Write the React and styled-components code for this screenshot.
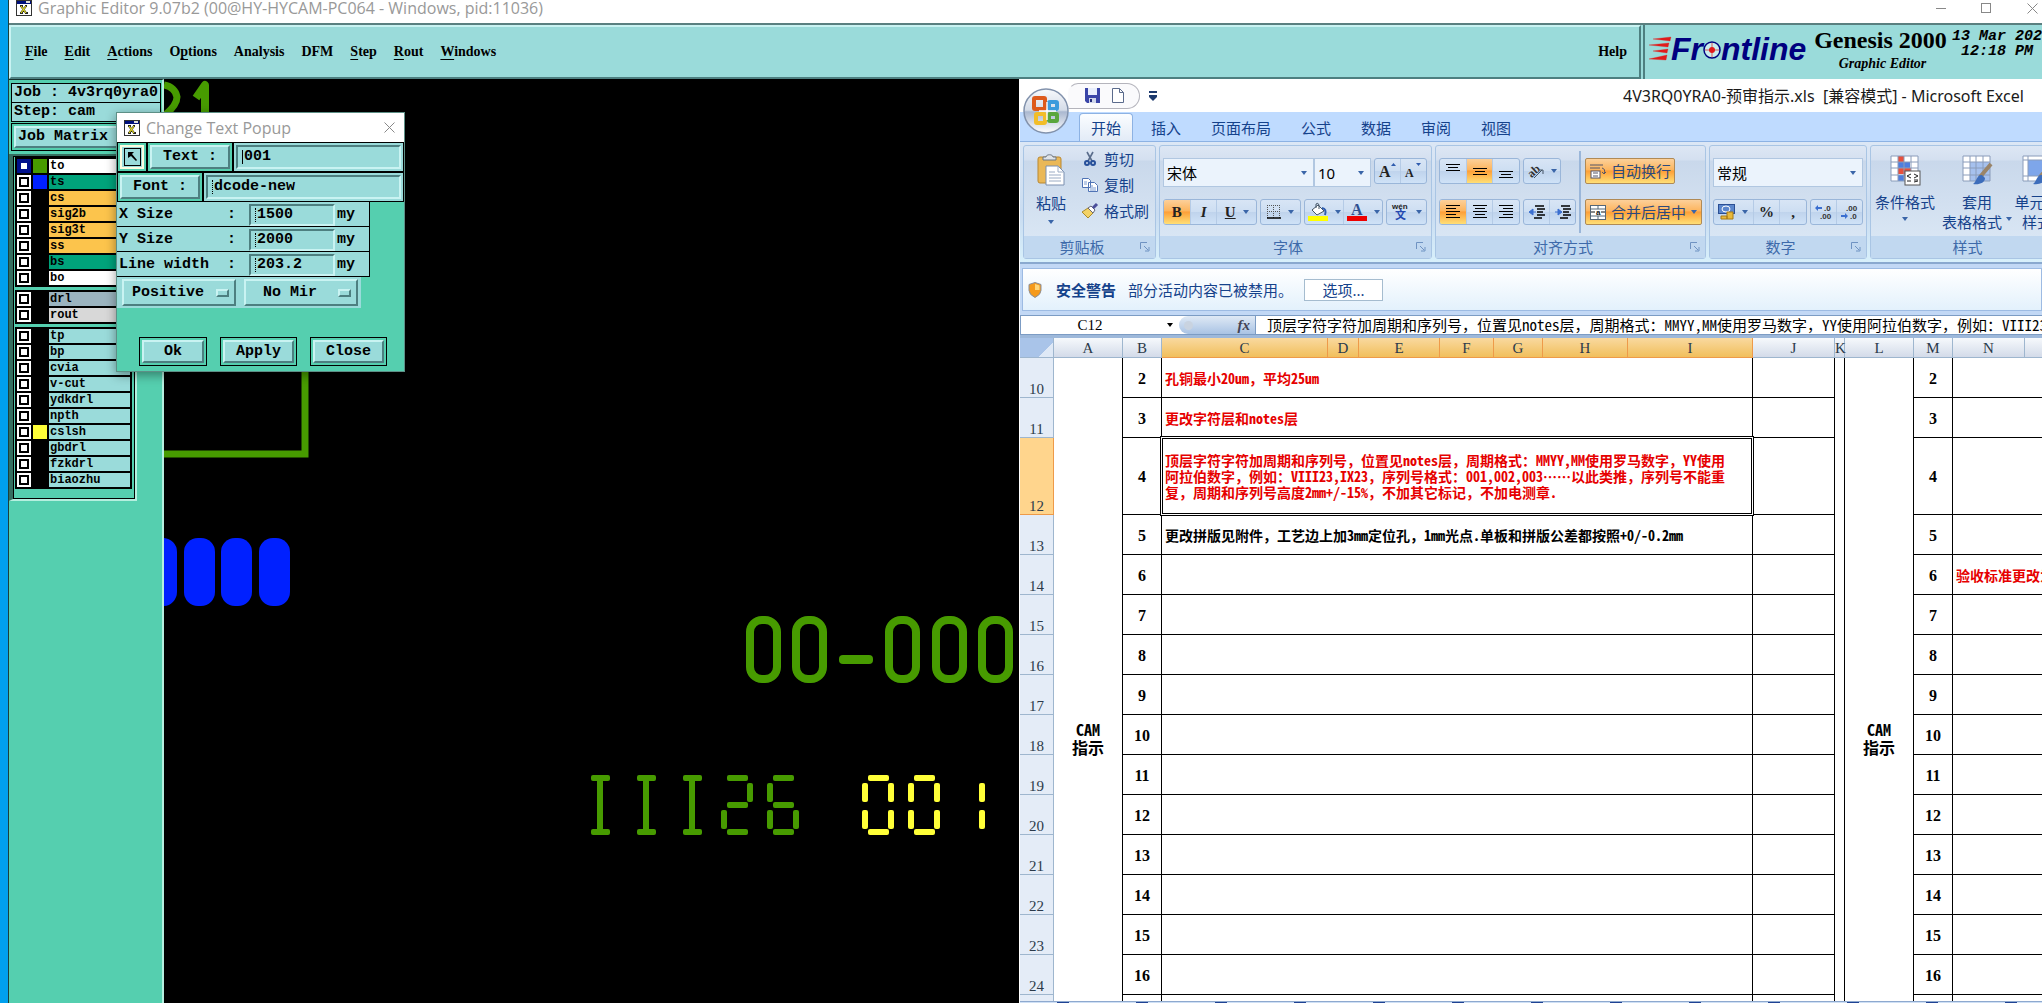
import React from 'react';
import styled, { createGlobalStyle, css } from 'styled-components';

const GlobalStyle = createGlobalStyle`
  *, *::before, *::after {
    box-sizing: border-box;
  }
  body {
    margin: 0;
    overflow: hidden;
    font-family: "Noto Sans", "Noto Sans CJK SC", sans-serif;
  }
  button, input, select {
    margin: 0;
    padding: 0;
    border: 0;
    border-radius: 0;
    background: none;
    color: inherit;
    font: inherit;
    outline: none;
  }
  svg {
    display: block;
    flex: none;
    overflow: visible;
  }
`;

const uiFont = '"Noto Sans", "Noto Sans CJK SC", sans-serif';
const songFont = '"Noto Sans Mono CJK SC", "Noto Sans CJK SC", monospace';
const courier = '"Liberation Mono", monospace';
const times = '"Liberation Serif", serif';

const raised = css`
  border: 2px solid;
  border-color: #c9f3f2 #4d7f80 #4d7f80 #c9f3f2;
`;

const sunken = css`
  border: 2px solid;
  border-color: #4d7f80 #c9f3f2 #c9f3f2 #4d7f80;
`;

/* ---------- Genesis frame ---------- */

const Desktop = styled.div`
  display: flex;
  height: 100vh;
  background: #00a0ee;
  padding-left: 8px;
`;

const Frame = styled.main`
  display: flex;
  flex-direction: column;
  flex: 1;
  min-width: 0;
  border-left: 1px solid #1c3f3c;
  background: #fff;
`;

const TitleBar = styled.header`
  display: flex;
  align-items: center;
  height: 23px;
  padding: 0 4px 7px 7px;
  font: 16px/20px "Open Sans", sans-serif;
  color: #999;
  white-space: nowrap;
`;

const TitleText = styled.span`
  flex: 1;
  margin-left: 6px;
`;

const WindowButtons = styled.div`
  display: flex;
  gap: 35px;
`;

const IconButton = styled.button`
  display: flex;
  align-items: center;
  justify-content: center;
`;

const MenuBar = styled.div`
  display: flex;
  height: 56px;
  border-top: 2px solid #5a8080;
  background: #9adbda;
  font: bold 14px/18px ${times};
  color: #000;
`;

const Menus = styled.nav`
  display: flex;
  align-items: center;
  gap: 17px;
  flex: 1;
  padding: 0 12px 0 14px;
  ${raised}
`;

const MenuButton = styled.button`
  white-space: nowrap;
  margin-left: ${(p) => (p.$end ? 'auto' : '0')};
  u {
    text-underline-offset: 3px;
  }
`;

const Brand = styled.div`
  display: flex;
  flex: none;
  width: 399px;
  margin-left: 2px;
  padding-left: 4px;
  border-left: 2px solid #4d7f80;
  overflow: hidden;
  white-space: nowrap;
`;

const Logo = styled.div`
  display: flex;
  align-items: center;
  width: 160px;
  height: 48px;
  font: italic bold 32px/36px "Liberation Sans", sans-serif;
  color: #00007f;
`;

const Product = styled.div`
  width: 143px;
  padding-top: 2px;
  text-align: center;
  font: bold 24px/26px ${times};
  small {
    display: block;
    padding-left: 4px;
    font: italic bold 14px/22px ${times};
  }
`;

const Clock = styled.div`
  padding-top: 4px;
  font: italic bold 15px/15px ${courier};
  white-space: pre;
`;

const Work = styled.div`
  display: flex;
  flex: 1;
  min-height: 0;
`;

/* ---------- Layer sidebar ---------- */

const Sidebar = styled.aside`
  flex: none;
  width: 155px;
  padding: 3px 1px 0 2px;
  border-top: 1px solid #16302c;
  border-right: 2px solid #b5efdf;
  background: #55cfaf;
  font: bold 15px/18px ${courier};
  color: #000;
`;

const InfoLine = styled.div`
  height: 20px;
  margin-bottom: -1px;
  padding-left: 2px;
  border: 1px solid #000;
  background: #9adbda;
  white-space: pre;
`;

const MatrixWrap = styled.div`
  margin-top: 2px;
  padding: 2px;
  border: 1px solid #000;
`;

const MatrixButton = styled.button`
  display: block;
  width: 100%;
  height: 22px;
  padding-left: 2px;
  text-align: left;
  background: #9adbda;
  ${raised}
`;

const LayerPanel = styled.div`
  width: 128px;
  margin: 3px 0 0 -2px;
  border: solid;
  border-width: 2px 2px 2px 4px;
  border-color: #356f60 #b5efdf #b5efdf #356f60;
`;

const LayerInner = styled.div`
  display: flex;
  flex-direction: column;
  gap: 3px;
  padding: 0 2px 9px 1px;
  border: 1px solid #000;
`;

const LayerGroup = styled.div`
  display: flex;
  flex-direction: column;
  gap: 2px;
  padding: 2px;
  background: #000;
`;

const LayerRow = styled.label`
  display: grid;
  grid-template-columns: 14px 14px 1fr;
  gap: 2px;
  height: 14px;
  font-size: 12px;
  line-height: 14px;
`;

const LayerCheck = styled.input`
  appearance: none;
  width: 14px;
  height: 14px;
  padding: 2px;
  background: ${(p) => (p.$active ? '#00108c' : '#fff')};
  &::before {
    content: '';
    display: block;
    width: 10px;
    height: 10px;
    border: 2px solid ${(p) => (p.$active ? '#00108c' : '#000')};
    background: #fff;
  }
`;

const Swatch = styled.span`
  background: ${(p) => p.$color || '#000'};
`;

const LayerName = styled.span`
  padding-left: 1px;
  background: ${(p) => p.$color};
`;

const Canvas = styled.section`
  flex: 1;
  min-width: 0;
  background: #000;
  overflow: hidden;
`;

/* ---------- Change text popup ---------- */

const Popup = styled.section`
  position: absolute;
  left: 116px;
  top: 112px;
  width: 289px;
  height: 260px;
  background: #55cfaf;
  border: 1px solid #5d8f86;
  box-shadow: 0 3px 10px rgba(0, 0, 0, 0.4);
  font: bold 15px/18px ${courier};
  color: #000;
`;

const PopupTitle = styled.header`
  display: flex;
  align-items: center;
  height: 29px;
  padding: 0 9px 0 7px;
  background: #fff;
  font: 16px/20px "Open Sans", sans-serif;
  color: #999;
`;

const PopupRow = styled.div`
  display: flex;
  height: 30px;
`;

const Boxed = styled.div`
  display: flex;
  width: ${(p) => (p.$width ? `${p.$width}px` : 'auto')};
  flex: ${(p) => (p.$width ? 'none' : 1)};
  padding: 2px;
  border: 1px solid #000;
  background: ${(p) => (p.$fill ? '#9adbda' : 'transparent')};
`;

const PushButton = styled.button`
  flex: 1;
  display: flex;
  align-items: center;
  justify-content: center;
  background: #9adbda;
  white-space: pre;
  ${raised}
`;

const PickButton = styled(PushButton)`
  border-color: #fdfce0;
`;

const Entry = styled.div`
  display: flex;
  align-items: center;
  width: ${(p) => (p.$width ? `${p.$width}px` : '100%')};
  min-width: 0;
  padding-left: 4px;
  ${sunken}
  &::before {
    content: '';
    height: 14px;
    border-left: 1px ${(p) => (p.$focus ? 'solid' : 'dotted')} #000;
    margin-right: 1px;
  }
  input {
    width: 100%;
    min-width: 0;
  }
`;

const SizeRow = styled.div`
  display: flex;
  align-items: center;
  width: 253px;
  height: 25px;
  padding: 2px 0 0 2px;
  border: 1px solid #000;
  border-width: 0 1px 1px 0;
  background: #9adbda;
  label {
    width: 130px;
    white-space: pre;
  }
  span {
    margin-left: 2px;
  }
`;

const OptionRow = styled.div`
  display: flex;
  gap: 8px;
  width: 244px;
  height: 31px;
  padding: 2px 0 2px 5px;
  background: #9adbda;
`;

const OptionMenu = styled.div`
  display: flex;
  align-items: center;
  width: 114px;
  padding-right: 5px;
  ${raised}
  select {
    appearance: none;
    flex: 1;
    min-width: 0;
    padding-left: ${(p) => p.$indent}px;
  }
  &::after {
    content: '';
    width: 13px;
    height: 8px;
    ${raised}
  }
`;

const PopupActions = styled.div`
  display: flex;
  gap: 13px;
  height: 29px;
  margin: 29px 0 0 22px;
`;

/* ---------- Excel ---------- */

const Excel = styled.section`
  position: relative;
  display: flex;
  flex-direction: column;
  flex: none;
  width: calc(50vw + 2px);
  min-width: 0;
  padding-left: 1px;
  background: #fff;
  overflow: hidden;
  font: 15px/20px ${uiFont};
  color: #15428b;
  white-space: nowrap;
`;

const ExcelTop = styled.header`
  display: flex;
  align-items: center;
  height: 33px;
  padding-left: 48px;
`;

const Orb = styled.button`
  position: absolute;
  left: 4px;
  top: 8px;
`;

const QuickAccess = styled.div`
  display: flex;
  align-items: center;
  gap: 12px;
  height: 26px;
  width: 72px;
  margin-right: 9px;
  padding-left: 16px;
  border: 1px solid #b4b4bc;
  border-left-color: transparent;
  border-radius: 10px 13px 13px 0;
  background: #fafafc;
`;

const ExcelTitle = styled.h1`
  flex: 1;
  margin: 0;
  padding: 1px 0 0 466px;
  font: 16px/24px ${uiFont};
  color: #1a1a1a;
`;

const Tabs = styled.nav`
  display: flex;
  gap: 6px;
  height: 29px;
  padding: 1px 0 0 59px;
  background: #bfdbff;
`;

const Tab = styled.button`
  height: 29px;
  padding: 0 11px 1px;
  border: 1px solid transparent;
  border-bottom: 0;
  border-radius: 4px 4px 0 0;
  ${(p) => p.$active && css`
    border-color: #8db2e3;
    background: linear-gradient(#fbfdff, #e1eaf6);
  `}
`;

const Ribbon = styled.div`
  display: flex;
  gap: 3px;
  height: 123px;
  padding: 3px 0 3px 3px;
  border-top: 1px solid #8db2e3;
  border-bottom: 2px solid #8aa9cf;
  background: linear-gradient(#dce7f5, #c9dcf1 60%, #d8f0fb);
`;

const Group = styled.section`
  display: flex;
  flex-direction: column;
  flex: none;
  width: ${(p) => p.$width}px;
  border: 1px solid #a9c5e4;
  border-radius: 3px;
  background: linear-gradient(#dde7f4 0, #d4e0f0 14px, #c9d8eb 15px, #d9e6f4 92px);
`;

const GroupBody = styled.div`
  display: flex;
  height: 91px;
`;

const GroupRows = styled.div`
  display: flex;
  flex-direction: column;
  gap: 12px;
  padding: 12px 0 0 3px;
`;

const GroupRow = styled.div`
  display: flex;
  align-items: flex-start;
  gap: 3px;
  height: ${(p) => p.$height}px;
`;

const GroupFooter = styled.footer`
  display: flex;
  align-items: center;
  height: 22px;
  padding-right: 5px;
  background: #c1d8f0;
  color: #3e6aaa;
  span {
    flex: 1;
    text-align: center;
  }
`;

const Combo = styled.div`
  display: flex;
  align-items: center;
  width: ${(p) => p.$width}px;
  height: 29px;
  margin-right: ${(p) => (p.$joined ? '-3px' : '0')};
  padding: 0 6px 0 3px;
  border: 1px solid #b1c7e1;
  background: #ebf3fc;
  color: #000;
  select {
    appearance: none;
    flex: 1;
    min-width: 0;
  }
`;

const ButtonSet = styled.div`
  display: flex;
  height: 26px;
  width: ${(p) => p.$width}px;
  border: 1px solid #9ab6d9;
  border-radius: 3px;
  background: linear-gradient(#d8e5f5, #cddef2 48%, #bfd3ec 50%, #cfe2f7);
  overflow: hidden;
`;

const orange = css`
  background: linear-gradient(#fcd09a, #fdb55e 45%, #fd9f38 50%, #ffdf76);
`;

const Tool = styled.button`
  display: flex;
  align-items: center;
  justify-content: center;
  gap: 7px;
  flex: ${(p) => p.$grow || 1};
  border-right: 1px solid #b5cbe6;
  font: bold 15px/20px ${times};
  color: #222;
  &:last-child {
    border-right: 0;
  }
  ${(p) => p.$on && orange}
`;

const TextTool = styled.button`
  display: flex;
  align-items: center;
  gap: 5px;
  width: ${(p) => p.$width}px;
  height: 26px;
  padding: 0 4px;
  border: 1px solid #b08a55;
  border-radius: 2px;
  color: #2d4a7c;
  ${orange}
`;

const Divider = styled.div`
  width: 2px;
  height: 82px;
  margin: 5px 1px 0 3px;
  background: #9ab6d9;
`;

const Paste = styled.button`
  display: flex;
  flex-direction: column;
  align-items: center;
  width: 54px;
  padding-top: 8px;
  gap: 7px;
`;

const ClipItems = styled.div`
  display: flex;
  flex-direction: column;
  padding: 1px 0 0 4px;
`;

const ClipItem = styled.button`
  display: flex;
  align-items: center;
  gap: 6px;
  height: 26px;
  padding-bottom: 2px;
`;

const BigTool = styled.button`
  display: flex;
  flex-direction: column;
  align-items: center;
  width: ${(p) => p.$width}px;
  padding-top: 9px;
  span {
    display: flex;
    align-items: center;
    gap: 4px;
    height: 20px;
  }
  svg:first-child {
    margin-bottom: 6px;
  }
`;

const Security = styled.div`
  display: flex;
  align-items: center;
  height: 43px;
  margin: 4px 0 4px 2px;
  padding-left: 5px;
  border: 1px solid #9dbbe3;
  background: linear-gradient(#fff, #e3f1fc);
  b {
    margin: 0 12px 0 14px;
  }
  button {
    width: 79px;
    height: 22px;
    margin-left: 11px;
    border: 1px solid #a5bccf;
    background: #fff;
  }
`;

const SecurityBand = styled.div`
  background: #c2d8f5;
  overflow: hidden;
`;

const FormulaBar = styled.div`
  display: flex;
  align-items: center;
  height: 20px;
  border: 1px solid #7c9cc4;
  border-right: 0;
  color: #000;
`;

const NameBox = styled.input`
  width: 138px;
  margin-right: 8px;
  text-align: center;
  font: 15px/18px ${times};
`;

const FxPill = styled.button`
  display: flex;
  align-items: center;
  justify-content: space-between;
  width: 77px;
  height: 18px;
  margin-left: 6px;
  padding: 0 5px;
  border-right: 1px solid #7c9cc4;
  border-radius: 9px 0 0 9px;
  background: linear-gradient(#dfe9f5, #a9c3e4);
  font: italic bold 15px/16px ${times};
  color: #445;
  &::before {
    content: '';
    width: 9px;
    height: 9px;
    border-radius: 5px;
    background: #c9d3e0;
  }
`;

const FormulaInput = styled.input`
  flex: 1;
  min-width: 0;
  padding-left: 11px;
  font: 15px/18px ${songFont};
`;

const Sheet = styled.div`
  flex: 1;
  min-height: 0;
  overflow: hidden;
  border-top: 3px solid #9db8da;
  color: #000;
`;

const Grid = styled.table`
  table-layout: fixed;
  width: 1085px;
  border-collapse: separate;
  border-spacing: 0;
`;

const ColHead = styled.th`
  height: 20px;
  padding: 0;
  border: 1px solid ${(p) => (p.$on ? '#ee9a49' : '#9eb6ce')};
  border-width: 0 1px 1px 0;
  background: ${(p) => (p.$on
    ? 'linear-gradient(#f9d99f, #f1bf5c)'
    : 'linear-gradient(#f6f9fc, #d3dbe9)')};
  font: 15px/18px ${times};
  color: #2b3a4a;
`;

const Corner = styled(ColHead)`
  background: linear-gradient(135deg, #a9c4e9 72%, #dfe9f6 72%);
`;

const RowHead = styled.th`
  height: ${(p) => p.$height}px;
  padding: 0;
  border: 1px solid ${(p) => (p.$on ? '#ee9a49' : '#9eb6ce')};
  border-width: 0 1px 1px 0;
  background: ${(p) => (p.$on ? '#ffd58d' : '#e4ecf7')};
  vertical-align: bottom;
  font: 15px/16px ${times};
  color: #2b3a4a;
`;

const Cell = styled.td`
  position: relative;
  padding: 0 3px;
  border: 0 solid #000;
  border-width: 0 1px 1px 0;
  font: bold 14px/16px ${songFont};
  color: ${(p) => (p.$red ? '#e60000' : '#000')};
  white-space: pre;
`;

const SelectedCell = styled(Cell)`
  &::after {
    content: '';
    position: absolute;
    inset: -2px;
    border: 1px solid #000;
    box-shadow: inset 0 0 0 1px #fff, inset 0 0 0 2px #000;
  }
`;

const NumberCell = styled(Cell)`
  padding-top: 2px;
  text-align: center;
  font: bold 16px/18px ${times};
`;

const SideCell = styled(Cell)`
  padding: 82px 0 0;
  border-bottom: 0;
  text-align: center;
  font-size: 16px;
  line-height: 18px;
`;

const GapCell = styled(Cell)`
  padding: 0;
  border-bottom: 0;
`;

const SheetTabs = styled.div`
  height: 2px;
  border-top: 1px solid #8ea9cf;
  background: repeating-linear-gradient(90deg, #cfe0f5 0 37px, #1f4293 37px 49px, #cfe0f5 49px 79px);
`;

const Caret = ({ color = '#3a65a8' }) => (
  <svg width="6" height="4" viewBox="0 0 6 4"><path d="M0 0h6L3 4z" fill={color} /></svg>
);

const XIcon = () => (
  <svg width="16" height="16" viewBox="0 0 16 16">
    <rect x=".5" y=".5" width="15" height="15" fill="#fff" stroke="#333" />
    <rect x="1" y="1" width="14" height="3" fill="#00107c" />
    <rect x="10" y="1" width="4" height="2" fill="#ddd" />
    <path d="M5 6l5 7M10 6l-5 7M4 6h3M4 13h3M9 6h2M9 13h3" stroke="#222" strokeWidth="2" />
    <path d="M5 6l5 7M10 6l-5 7" stroke="#e8df20" strokeWidth="1.2" />
  </svg>
);

const CloseIcon = () => (
  <svg width="11" height="11" viewBox="0 0 11 11"><path d="M.5.5l10 10M10.5.5l-10 10" stroke="#888" /></svg>
);

const Launcher = () => (
  <svg width="10" height="10" viewBox="0 0 10 10" fill="none" stroke="#6f93c2">
    <path d="M.5 7V.5H7" />
    <path d="M4 4l4 4M9 5v4H5" />
  </svg>
);

const Lines = ({ widths, align = 'center', top = 0 }) => (
  <svg width="14" height="16" viewBox="0 0 14 16" shapeRendering="crispEdges">
    {widths.map((w, i) => {
      const x = { left: 0, center: (14 - w) / 2, right: 14 - w }[align];
      return <rect key={i} x={x} y={top + i * 3} width={w} height="1" fill="#000" />;
    })}
  </svg>
);

const Indent = ({ out }) => (
  <svg width="16" height="14" viewBox="0 0 16 14">
    <path d="M6 1h9M8 4h8M8 7h6M8 10h8M5 13h8" stroke="#000" strokeWidth="1.3" />
    <path d={out ? 'M4 4L0 7l4 3zM3 7h4' : 'M3 4l4 3-4 3zM0 7h4'} fill="#3b6fd0" stroke="#3b6fd0" />
  </svg>
);

const FontGlyph = ({ size, up }) => (
  <svg width="18" height="18" viewBox="0 0 18 18">
    <text x="0" y="15" fontFamily="Liberation Serif" fontWeight="bold" fontSize={size} fill="#222">A</text>
    <path d={up ? 'M12 4h5l-2.500-3z' : 'M11 1h5l-2.500 3z'} fill="#2f5cae" />
  </svg>
);

const OrbIcon = () => (
  <svg width="46" height="48" viewBox="0 0 46 48">
    <defs>
      <linearGradient id="orb" x1="0" y1="0" x2="0" y2="1">
        <stop offset="0" stopColor="#f7f9fc" />
        <stop offset=".48" stopColor="#d5dce8" />
        <stop offset=".52" stopColor="#aab8d0" />
        <stop offset="1" stopColor="#fff" />
      </linearGradient>
    </defs>
    <circle cx="23" cy="24" r="22" fill="url(#orb)" stroke="#8292ac" strokeWidth="1.5" />
    <g fill="none" strokeWidth="4">
      <rect x="11" y="11" width="11" height="11" rx="1" stroke="#dd5a1c" />
      <rect x="26" y="15" width="8" height="7" rx="1" stroke="#3d9bdc" />
      <rect x="13" y="27" width="9" height="9" rx="1" stroke="#f2bd28" />
      <rect x="26" y="27" width="8" height="7" rx="1" stroke="#5aa63c" />
    </g>
    <path d="M24 15v18M16 24h17" stroke="#fff" strokeWidth="1.4" />
  </svg>
);

const PasteIcon = () => (
  <svg width="28" height="32" viewBox="0 0 28 32">
    <rect x="1" y="3" width="23" height="26" rx="2" fill="#eab857" stroke="#b98731" />
    <path d="M6 6h13V3h-3c0-3-7-3-7 0H6z" fill="#dfe3e8" stroke="#6b7683" />
    <path d="M9 12h12l6 6v13H9z" fill="#fff" stroke="#7a8fb0" />
    <path d="M21 12v6h6M12 18h6M12 21h12M12 24h12M12 27h12" fill="none" stroke="#9aabc4" />
  </svg>
);

const ScissorsIcon = () => (
  <svg width="16" height="16" viewBox="-1 0 16 16" fill="none">
    <path d="M4 1l5 9M10 1L5 10" stroke="#5a6d8c" strokeWidth="1.6" />
    <circle cx="4" cy="12" r="2" stroke="#27509a" strokeWidth="2" />
    <circle cx="10" cy="12" r="2" stroke="#27509a" strokeWidth="2" />
  </svg>
);

const CopyIcon = () => (
  <svg width="16" height="14" viewBox="0 0 16 14" fill="#fff" stroke="#4f73b5">
    <path d="M.5.5h6l2 2v7h-8zM6.500 4.500h6l3 3v6h-9z" />
    <path d="M2 4h3M2 6h3M8 8h3M8 10h6M8 12h6" stroke="#7b9bd1" />
  </svg>
);

const BrushIcon = () => (
  <svg width="16" height="14" viewBox="0 0 16 14">
    <path d="M0 8l6-4 5 5-5 5z" fill="#f3d266" stroke="#a98a2e" />
    <path d="M6 4l3-2 4 4-2 3z" fill="#fff" stroke="#667" />
    <path d="M11 4l4-4" stroke="#4b4f9a" strokeWidth="3" />
  </svg>
);

const TableIcon = ({ kind }) => (
  <svg width="31" height="31" viewBox="0 0 31 31">
    <path d="M1 1h27v25H1z" fill="#fff" />
    {kind === 'cond' && (
      <g>
        <path d="M8 1h6v6H8zM8 13h13v6H8z" fill="#e8503c" />
        <path d="M8 7h12v6H8zM8 20h6v6H8z" fill="#4e7ee0" />
      </g>
    )}
    {kind === 'table' && <path d="M8 7h20v19H8z" fill="#a6c1ee" />}
    {kind === 'cell' && <path d="M6 5h22v16H6z" fill="#7ea6ea" />}
    {kind === 'cell'
      ? <path d="M1 1h27v25H1zM6 1v25M1 5h27M1 21h27" fill="none" stroke="#8a9cba" />
      : <path d="M1 1h27v25H1zM8 1v25M14 1v25M21 1v25M1 7h27M1 13h27M1 20h27" fill="none" stroke="#8a9cba" />}
    {kind === 'cond' ? (
      <g>
        <rect x="15" y="16" width="15" height="14" fill="#fff" stroke="#555" />
        <path d="M21 19l-4 2 4 2M17 26h4M24 19l4 2-4 2M24 27l4-1M24 25h4" fill="none" stroke="#222" />
      </g>
    ) : (
      <g>
        <path d="M29 9L18 22" stroke="#9a8468" strokeWidth="4" />
        <path d="M20 20c-5-1-5 6-9 9 6 1 12-1 12-6z" fill="#3d6dbb" />
      </g>
    )}
  </svg>
);

const layerGroups = [
  [
    ['to', '#fff', '#479b00'],
    ['ts', '#00a37b', '#0020ff'],
    ['cs', '#fcc44c'],
    ['sig2b', '#fcc44c'],
    ['sig3t', '#fcc44c'],
    ['ss', '#fcc44c'],
    ['bs', '#00a37b'],
    ['bo', '#fff'],
  ],
  [
    ['drl', '#9bb4bf'],
    ['rout', '#d8d8d8'],
  ],
  [
    ['tp', '#9adbda'],
    ['bp', '#9adbda'],
    ['cvia', '#9adbda'],
    ['v-cut', '#9adbda'],
    ['ydkdrl', '#9adbda'],
    ['npth', '#9adbda'],
    ['cslsh', '#9adbda', '#ffff38'],
    ['gbdrl', '#9adbda'],
    ['fzkdrl', '#9adbda'],
    ['biaozhu', '#9adbda'],
  ],
];

const menus = [
  ['', 'F', 'ile'],
  ['', 'E', 'dit'],
  ['', 'A', 'ctions'],
  ['O', 'p', 'tions'],
  ['Analysis', '', ''],
  ['DFM', '', ''],
  ['', 'S', 'tep'],
  ['', 'R', 'out'],
  ['', 'W', 'indows'],
];

// [column letter, width, inside the current selection]
const columns = [
  ['A', 69], ['B', 39], ['C', 166, true], ['D', 31, true], ['E', 81, true],
  ['F', 54, true], ['G', 49, true], ['H', 85, true], ['I', 125, true],
  ['J', 82], ['K', 10], ['L', 69], ['M', 39], ['N', 72], ['O', 80],
];

const notes = {
  10: ['孔铜最小20um，平均25um', true],
  11: ['更改字符层和notes层', true],
  12: ['顶层字符字符加周期和序列号，位置见notes层，周期格式：MMYY,MM使用罗马数字，YY使用\n阿拉伯数字，例如：VIII23,IX23，序列号格式：001,002,003……以此类推，序列号不能重\n复，周期和序列号高度2mm+/-15%，不加其它标记，不加电测章.', true],
  13: ['更改拼版见附件，工艺边上加3mm定位孔，1mm光点.单板和拼版公差都按照+0/-0.2mm', false],
};

const rows = Array.from({ length: 16 }, (_, i) => i + 10);

const LayerList = () => (
  <LayerPanel>
    <LayerInner>
      {layerGroups.map((group) => (
        <LayerGroup key={group[0][0]}>
          {group.map(([name, color, swatch]) => (
            <LayerRow key={name}>
              <LayerCheck type="checkbox" $active={name === 'to'} />
              <Swatch $color={swatch} />
              <LayerName $color={color}>{name}</LayerName>
            </LayerRow>
          ))}
        </LayerGroup>
      ))}
    </LayerInner>
  </LayerPanel>
);

// Horizontal and vertical bars of the dashed character strokes
const Bars = ({ color, bars }) => (
  <g fill={color}>
    {bars.map(([x, y, w, h]) => <rect key={`${x}-${y}`} x={x} y={y} width={w} height={h} rx="2" />)}
  </g>
);

const segments = {
  top: [6, 0, 21, 6],
  topLeft: [0, 8, 6, 19],
  topRight: [26, 8, 6, 19],
  mid: [6, 27, 21, 6],
  lowLeft: [0, 35, 6, 19],
  lowRight: [26, 35, 6, 19],
  low: [6, 54, 21, 6],
};

const Digit = ({ x, y, color, on }) => (
  <g transform={`translate(${x} ${y})`}>
    <Bars color={color} bars={on.map((s) => segments[s])} />
  </g>
);

const Drawing = () => (
  <svg width="856" height="924" viewBox="164 79 856 924">
    <g fill="none" stroke="#479b00">
      <path d="M164 85q11 2 13 12q0 8-12 18M305 340V454H164" strokeWidth="7" />
      <path d="M196 98l9-13v30" strokeWidth="8" strokeLinejoin="round" />
      {[746, 792, 885, 932, 978].map((x) => (
        <rect key={x} x={x + 4} y="620" width="27" height="59" rx="12" strokeWidth="8" />
      ))}
    </g>
    <rect x="839" y="655" width="34" height="9" rx="4" fill="#479b00" />
    {[146, 184, 221, 259].map((x) => (
      <rect key={x} x={x} y="538" width="31" height="68" rx="14" fill="#0020ff" />
    ))}
    {[591, 637, 683].map((x) => (
      <Bars key={x} color="#479b00" bars={[[x, 775, 19, 6], [x + 6, 777, 6, 56], [x, 829, 19, 6]]} />
    ))}
    <Digit x={721} y={775} color="#479b00" on={['top', 'topRight', 'mid', 'lowLeft', 'low']} />
    <Digit x={767} y={775} color="#479b00" on={['top', 'topLeft', 'mid', 'lowLeft', 'lowRight', 'low']} />
    <Digit x={862} y={775} color="#ffff38" on={['top', 'topLeft', 'topRight', 'lowLeft', 'lowRight', 'low']} />
    <Digit x={908} y={775} color="#ffff38" on={['top', 'topLeft', 'topRight', 'lowLeft', 'lowRight', 'low']} />
    <Digit x={953} y={775} color="#ffff38" on={['topRight', 'lowRight']} />
  </svg>
);

const SizeField = ({ id, label, value }) => (
  <SizeRow>
    <label htmlFor={id}>{label}</label>
    <Entry $width={86}><input id={id} defaultValue={value} /></Entry>
    <span>my</span>
  </SizeRow>
);

const TextPopup = () => (
  <Popup>
    <PopupTitle>
      <XIcon />
      <TitleText>Change Text Popup</TitleText>
      <IconButton aria-label="Close popup"><CloseIcon /></IconButton>
    </PopupTitle>
    <PopupRow>
      <Boxed $width={30}>
        <PickButton aria-label="Pick text">
          <svg width="17" height="18" viewBox="0 0 17 18">
            <rect x=".5" y=".5" width="16" height="17" fill="none" stroke="#000" />
            <path d="M4 4h6L8 6l5 6-1 1-5-5-3 2z" fill="#000" />
          </svg>
        </PickButton>
      </Boxed>
      <Boxed $width={86}><PushButton>Text :</PushButton></Boxed>
      <Boxed $fill><Entry $focus><input aria-label="Text" defaultValue="001" /></Entry></Boxed>
    </PopupRow>
    <PopupRow>
      <Boxed $width={86}><PushButton>Font :</PushButton></Boxed>
      <Boxed $fill><Entry><input aria-label="Font" defaultValue="dcode-new" /></Entry></Boxed>
    </PopupRow>
    <SizeField id="x-size" label="X Size      :" value="1500" />
    <SizeField id="y-size" label="Y Size      :" value="2000" />
    <SizeField id="line-width" label="Line width  :" value="203.2" />
    <OptionRow>
      <OptionMenu $indent={8}><select aria-label="Polarity"><option>Positive</option></select></OptionMenu>
      <OptionMenu $indent={17}><select aria-label="Mirror"><option>No Mir</option></select></OptionMenu>
    </OptionRow>
    <PopupActions>
      <Boxed $width={68}><PushButton>Ok</PushButton></Boxed>
      <Boxed $width={77}><PushButton>Apply</PushButton></Boxed>
      <Boxed $width={77}><PushButton>Close</PushButton></Boxed>
    </PopupActions>
  </Popup>
);

const RibbonGroup = ({ label, width, launcher = true, children }) => (
  <Group $width={width}>
    <GroupBody>{children}</GroupBody>
    <GroupFooter>
      <span>{label}</span>
      {launcher && <IconButton aria-label={label}><Launcher /></IconButton>}
    </GroupFooter>
  </Group>
);

const FontGroup = () => (
  <RibbonGroup label="字体" width={273}>
    <GroupRows>
      <GroupRow $height={29}>
        <Combo $width={151} $joined><select aria-label="字体"><option>宋体</option></select><Caret /></Combo>
        <Combo $width={57}><select aria-label="字号"><option>10</option></select><Caret /></Combo>
        <ButtonSet $width={53}>
          <Tool aria-label="增大字号"><FontGlyph size={16} up /></Tool>
          <Tool aria-label="减小字号"><FontGlyph size={12} /></Tool>
        </ButtonSet>
      </GroupRow>
      <GroupRow $height={26}>
        <ButtonSet $width={94}>
          <Tool $on>B</Tool>
          <Tool><i>I</i></Tool>
          <Tool $grow={1.5}><u>U</u><Caret /></Tool>
        </ButtonSet>
        <ButtonSet $width={41}>
          <Tool aria-label="边框">
            <svg width="14" height="14" viewBox="0 0 14 14">
              <path d="M.5 0v13M6.500 0v13M12.500 0v13M0 .5h13M0 6.500h13" stroke="#555" strokeDasharray="1 1" />
              <path d="M0 13h14" stroke="#000" strokeWidth="1.5" />
            </svg>
            <Caret />
          </Tool>
        </ButtonSet>
        <ButtonSet $width={79}>
          <Tool aria-label="填充颜色">
            <svg width="20" height="18" viewBox="0 0 20 18">
              <path d="M4 7l6-5 6 6-7 4z" fill="#fff" stroke="#456" />
              <path d="M8 5V1q2-2 3 1v4" fill="none" stroke="#456" />
              <path d="M14 5q5 1 3 7" fill="none" stroke="#2f5cae" strokeWidth="2" />
              <rect y="13" width="20" height="5" fill="#ff0" />
            </svg>
            <Caret />
          </Tool>
          <Tool aria-label="字体颜色">
            <svg width="20" height="18" viewBox="0 0 20 18">
              <text x="4" y="12" fontFamily="Liberation Serif" fontWeight="bold" fontSize="16" fill="#2f5090">A</text>
              <rect y="13" width="20" height="5" fill="#e00" />
            </svg>
            <Caret />
          </Tool>
        </ButtonSet>
        <ButtonSet $width={41}>
          <Tool aria-label="拼音">
            <svg width="18" height="18" viewBox="0 0 18 18">
              <text x="1" y="6" fontFamily="Liberation Sans" fontWeight="bold" fontSize="8" fill="#222">wén</text>
              <text x="4" y="16" fontFamily="Noto Sans CJK SC" fontSize="11" fill="#2347b0">文</text>
            </svg>
            <Caret />
          </Tool>
        </ButtonSet>
      </GroupRow>
    </GroupRows>
  </RibbonGroup>
);

const AlignGroup = () => (
  <RibbonGroup label="对齐方式" width={271}>
    <GroupRows>
      <GroupRow $height={29}>
        <ButtonSet $width={81}>
          <Tool aria-label="顶端对齐"><Lines widths={[14, 10, 14]} top={1} /></Tool>
          <Tool $on aria-label="垂直居中"><Lines widths={[14, 10, 14]} top={5} /></Tool>
          <Tool aria-label="底端对齐"><Lines widths={[14, 10, 14]} top={8} /></Tool>
        </ButtonSet>
        <ButtonSet $width={38}>
          <Tool aria-label="方向">
            <svg width="16" height="16" viewBox="0 0 16 16">
              <text x="0" y="12" fontFamily="Liberation Serif" fontWeight="bold" fontSize="12" fill="#333" transform="rotate(-42 6 9)">ab</text>
              <path d="M6 15l8-8M11 7h4v4" fill="none" stroke="#456" />
            </svg>
            <Caret />
          </Tool>
        </ButtonSet>
      </GroupRow>
      <GroupRow $height={26}>
        <ButtonSet $width={81}>
          <Tool $on aria-label="左对齐"><Lines widths={[14, 10, 14, 10, 14]} align="left" top={1} /></Tool>
          <Tool aria-label="居中"><Lines widths={[14, 10, 14, 10, 14]} top={1} /></Tool>
          <Tool aria-label="右对齐"><Lines widths={[14, 10, 14, 10, 14]} align="right" top={1} /></Tool>
        </ButtonSet>
        <ButtonSet $width={53}>
          <Tool aria-label="减少缩进"><Indent out /></Tool>
          <Tool aria-label="增加缩进"><Indent /></Tool>
        </ButtonSet>
      </GroupRow>
    </GroupRows>
    <Divider />
    <GroupRows>
      <GroupRow $height={29}>
        <TextTool $width={90}>
          <svg width="16" height="15" viewBox="0 0 16 15" fill="none" stroke="#556">
            <path d="M0 1h13M0 4h10" />
            <rect x="1" y="7" width="9" height="7" fill="#fff" />
            <path d="M3 9h5M3 12h5M12 4q4 1 2 6l-2-2m2 2l2-2" />
          </svg>
          自动换行
        </TextTool>
      </GroupRow>
      <GroupRow $height={26}>
        <TextTool $width={117}>
          <svg width="16" height="15" viewBox="0 0 16 15">
            <rect x=".5" y=".5" width="15" height="14" fill="#fff" stroke="#567" />
            <path d="M0 4h16M0 11h16M8 0v4M8 11v4" stroke="#567" />
            <text x="6" y="10" fontFamily="Liberation Sans" fontWeight="bold" fontSize="8" fill="#111">a</text>
            <path d="M1 7h4M11 7h4" stroke="#111" />
          </svg>
          合并后居中
          <Caret />
        </TextTool>
      </GroupRow>
    </GroupRows>
  </RibbonGroup>
);

const NumberGroup = () => (
  <RibbonGroup label="数字" width={158}>
    <GroupRows>
      <GroupRow $height={29}>
        <Combo $width={150}><select aria-label="数字格式"><option>常规</option></select><Caret /></Combo>
      </GroupRow>
      <GroupRow $height={26}>
        <ButtonSet $width={94}>
          <Tool $grow={1.5} aria-label="会计数字格式">
            <svg width="17" height="16" viewBox="0 0 17 16">
              <rect x=".5" y=".5" width="16" height="9" fill="#5b86cc" stroke="#2b4f94" />
              <ellipse cx="8" cy="5" rx="4" ry="3" fill="none" stroke="#fff" />
              <path d="M9 8h6v7H9zM3 12h6v3H3z" fill="#e9b93a" stroke="#a87a14" />
            </svg>
            <Caret />
          </Tool>
          <Tool>%</Tool>
          <Tool>,</Tool>
        </ButtonSet>
        <ButtonSet $width={53}>
          {[true, false].map((more) => (
            <Tool key={String(more)} aria-label={more ? '增加小数位数' : '减少小数位数'}>
              <svg width="17" height="16" viewBox="0 0 17 16" fontFamily="Liberation Sans" fontWeight="bold" fontSize="8" fill="#333">
                <text x={more ? 9 : 5} y="7">{more ? '.0' : '.00'}</text>
                <text x={more ? 5 : 9} y="15">{more ? '.00' : '.0'}</text>
                <path d={more ? 'M0 4l3-3v2h4v2H3v2z' : 'M7 12l-3-3v2H0v2h4v2z'} fill="#3b6fd0" />
              </svg>
            </Tool>
          ))}
        </ButtonSet>
      </GroupRow>
    </GroupRows>
  </RibbonGroup>
);

const SheetGrid = () => (
  <Grid>
    <colgroup>
      <col style={{ width: 34 }} />
      {columns.map(([name, width]) => <col key={name} style={{ width }} />)}
    </colgroup>
    <thead>
      <tr>
        <Corner />
        {columns.map(([name, , on]) => <ColHead key={name} $on={on} scope="col">{name}</ColHead>)}
      </tr>
    </thead>
    <tbody>
      {rows.map((row, i) => {
        const [text, red] = notes[row] || [];
        const Note = row === 12 ? SelectedCell : Cell;
        return (
          <tr key={row}>
            <RowHead $height={row === 12 ? 77 : 40} $on={row === 12} scope="row">{row}</RowHead>
            {i === 0 && <SideCell rowSpan={rows.length}>{'CAM\n指示'}</SideCell>}
            <NumberCell>{row - 8}</NumberCell>
            <Note colSpan={7} $red={red}>{text}</Note>
            <Cell />
            {i === 0 && <GapCell rowSpan={rows.length} />}
            {i === 0 && <SideCell rowSpan={rows.length}>{'CAM\n指示'}</SideCell>}
            <NumberCell>{row - 8}</NumberCell>
            <Cell colSpan={2} $red>{row === 14 ? '验收标准更改为' : ''}</Cell>
          </tr>
        );
      })}
    </tbody>
  </Grid>
);

const ExcelWindow = () => (
  <Excel>
    <ExcelTop>
      <QuickAccess>
        <IconButton aria-label="保存">
          <svg width="15" height="15" viewBox="0 0 15 15">
            <path d="M0 0h15v15H2l-2-2z" fill="#3a45a8" />
            <rect x="3" y="0" width="9" height="7" fill="#e8eefc" />
            <rect x="4" y="10" width="7" height="5" fill="#cfd6ea" />
            <rect x="5" y="11" width="2" height="3" fill="#222a7a" />
          </svg>
        </IconButton>
        <IconButton aria-label="新建">
          <svg width="12" height="15" viewBox="0 0 12 15"><path d="M.5.5h7l4 4v10H.5zM7.500.5v4h4" fill="#fff" stroke="#5b6b8c" /></svg>
        </IconButton>
      </QuickAccess>
      <IconButton aria-label="自定义快速访问工具栏">
        <svg width="8" height="10" viewBox="0 0 8 10"><path d="M0 0h8v2H0zM0 4h8v2L4 10 0 6z" fill="#1d3a6e" /></svg>
      </IconButton>
      <ExcelTitle>4V3RQ0YRA0-预审指示.xls&nbsp; [兼容模式] - Microsoft Excel</ExcelTitle>
    </ExcelTop>
    <Tabs>
      {['开始', '插入', '页面布局', '公式', '数据', '审阅', '视图'].map((tab, i) => (
        <Tab key={tab} $active={i === 0}>{tab}</Tab>
      ))}
    </Tabs>
    <Orb aria-label="Office"><OrbIcon /></Orb>
    <Ribbon>
      <RibbonGroup label="剪贴板" width={133}>
        <Paste><PasteIcon />粘贴<Caret /></Paste>
        <ClipItems>
          <ClipItem><ScissorsIcon />剪切</ClipItem>
          <ClipItem><CopyIcon />复制</ClipItem>
          <ClipItem><BrushIcon />格式刷</ClipItem>
        </ClipItems>
      </RibbonGroup>
      <FontGroup />
      <AlignGroup />
      <NumberGroup />
      <RibbonGroup label="样式" width={200} launcher={false}>
        <BigTool $width={68}><TableIcon kind="cond" /><span>条件格式</span><span><Caret /></span></BigTool>
        <BigTool $width={76}><TableIcon kind="table" /><span>套用</span><span>表格格式<Caret /></span></BigTool>
        <BigTool $width={44}><TableIcon kind="cell" /><span>单元格</span><span>样式</span></BigTool>
      </RibbonGroup>
    </Ribbon>
    <SecurityBand>
      <Security>
        <svg width="14" height="16" viewBox="0 0 14 16">
          <path d="M7 .5l6 2v6q0 4-6 7-6-3-6-7v-6z" fill="#f59a1b" stroke="#8a8f9a" />
          <path d="M7 2l4.500 1.500V8H7z" fill="#ffd77a" />
        </svg>
        <b>安全警告</b>
        部分活动内容已被禁用。
        <button type="button">选项...</button>
      </Security>
    </SecurityBand>
    <FormulaBar>
      <NameBox aria-label="名称框" defaultValue="C12" />
      <Caret color="#000" />
      <FxPill>fx</FxPill>
      <FormulaInput aria-label="编辑栏" defaultValue="顶层字符字符加周期和序列号，位置见notes层，周期格式：MMYY,MM使用罗马数字，YY使用阿拉伯数字，例如：VIII23,IX23" />
    </FormulaBar>
    <Sheet><SheetGrid /></Sheet>
    <SheetTabs />
  </Excel>
);

const App = () => (
  <>
    <GlobalStyle />
    <Desktop>
      <Frame>
        <TitleBar>
          <XIcon />
          <TitleText>Graphic Editor 9.07b2 (00@HY-HYCAM-PC064 - Windows, pid:11036)</TitleText>
          <WindowButtons>
            <IconButton aria-label="Minimize"><svg width="10" height="10"><path d="M0 5.500h10" stroke="#888" /></svg></IconButton>
            <IconButton aria-label="Maximize"><svg width="11" height="11"><rect x=".5" y=".5" width="9" height="9" fill="none" stroke="#888" /></svg></IconButton>
            <IconButton aria-label="Close"><CloseIcon /></IconButton>
          </WindowButtons>
        </TitleBar>
        <MenuBar>
          <Menus>
            {menus.map(([before, key, after]) => (
              <MenuButton key={before + key + after}>{before}<u>{key}</u>{after}</MenuButton>
            ))}
            <MenuButton $end>Help</MenuButton>
          </Menus>
          <Brand>
            <Logo>
              <svg width="22" height="24" viewBox="0 0 22 24" stroke="#e01b1b" fill="#e01b1b">
                <path d="M4 2l18-2-1 4zM0 8l20-2-1 4zM4 14l15-2-1 4zM0 22l18-4-1 5z" strokeWidth=".3" />
              </svg>
              Fr
              <svg width="18" height="20" viewBox="0 0 18 20">
                <circle cx="9" cy="11" r="8" fill="#c9eded" stroke="#00007f" strokeWidth="1.5" />
                <circle cx="9" cy="11" r="3" fill="#e01b1b" />
                <path d="M9 4v14M2 11h14" stroke="#e01b1b" strokeWidth=".7" />
              </svg>
              ntline
            </Logo>
            <Product>Genesis 2000<small>Graphic Editor</small></Product>
            <Clock>{'13 Mar 202\n 12:18 PM'}</Clock>
          </Brand>
        </MenuBar>
        <Work>
          <Sidebar>
            <InfoLine>Job : 4v3rq0yra0</InfoLine>
            <InfoLine>Step: cam</InfoLine>
            <MatrixWrap><MatrixButton>Job Matrix</MatrixButton></MatrixWrap>
            <LayerList />
          </Sidebar>
          <Canvas><Drawing /></Canvas>
          <ExcelWindow />
        </Work>
      </Frame>
    </Desktop>
    <TextPopup />
  </>
);

export default App;
